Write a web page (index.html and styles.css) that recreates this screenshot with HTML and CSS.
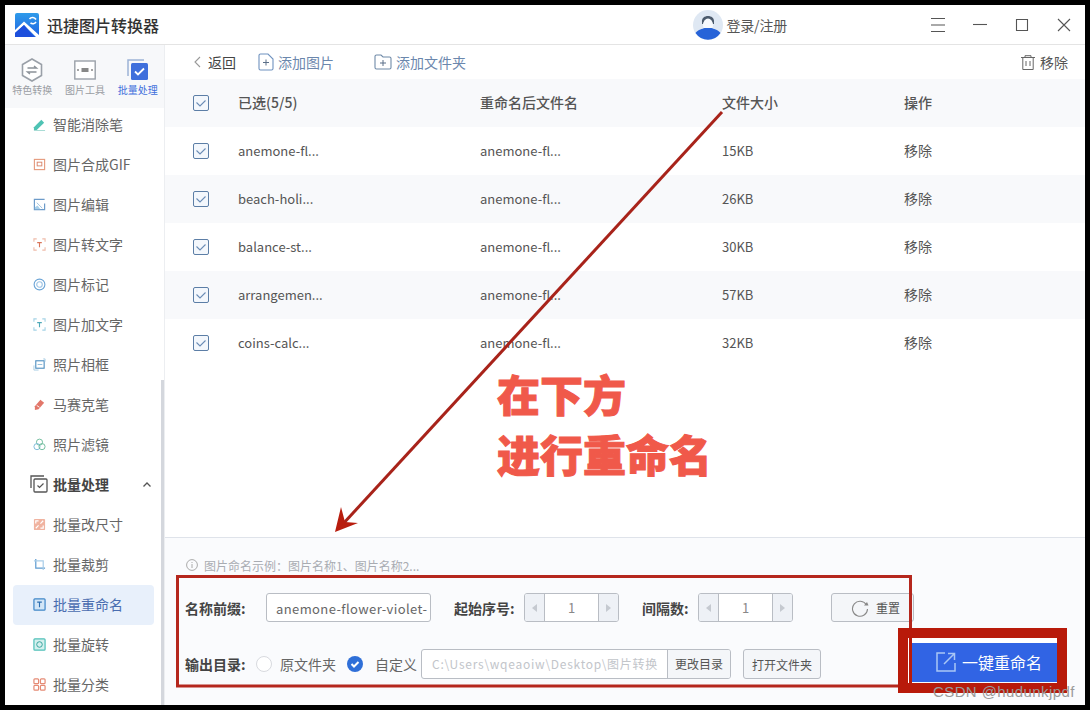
FILE: index.html
```html
<!DOCTYPE html>
<html lang="zh-CN">
  <head>
    <meta charset="UTF-8" />
    <title>迅捷图片转换器</title>
    <link rel="stylesheet" href="styles.css">
  </head>
  <body>
    <div class="app">
      <header class="titlebar">
        <svg class="logo" viewBox="0 0 24 24">
          <defs>
            <linearGradient id="logoBg" x1="0" y1="0" x2="0" y2="1">
              <stop offset="0" stop-color="#2f9bea" />
              <stop offset="1" stop-color="#1f62e2" />
            </linearGradient>
          </defs>
          <rect width="24" height="24" rx="2" fill="url(#logoBg)" />
          <path d="M0 17L9 8.500 24 22v2h-3L9 12 0 20z" fill="#fff" />
          <path d="M0 20l9-8 10 12H0z" fill="#1d4fdc" />
          <path d="M14.500 6a4 4 0 0 1 6.500 .5M21 9a4 4 0 0 1-5.500 1" stroke="#fff" stroke-width="1.600" fill="none" />
        </svg>
        <span class="app-name">迅捷图片转换器</span>
        <div class="user">
          <svg class="avatar" viewBox="0 0 30 30">
            <circle cx="15" cy="15" r="15" fill="#dfe8f3" />
            <path d="M9 12c-1-8 13-8 12 0v2H9z" fill="#4b5a6c" />
            <ellipse cx="15" cy="15" rx="5" ry="6.500" fill="#f6f9fd" />
            <path d="M2.500 23c3-4 7-4 9-5h7c2 1 6 1 9 5a15 15 0 0 1-25 0z" fill="#2763d8" />
          </svg>
          <span>登录/注册</span>
        </div>
        <div class="win-btns">
          <svg viewBox="0 0 14 14"><path d="M0 .5h14M0 7h14M0 13.500h14" /></svg>
          <svg viewBox="0 0 14 14"><path d="M0 6.500h14" /></svg>
          <svg viewBox="0 0 14 14"><path d="M1.500 1.500h11v11h-11z" /></svg>
          <svg viewBox="0 0 14 14"><path d="M1 1l12 12M13 1L1 13" /></svg>
        </div>
      </header>

      <div class="body-wrap">
        <aside class="sidebar">
          <div class="tabs">
            <div class="tab">
              <svg viewBox="0 0 22 24">
                <path d="M11 1l9.500 5.500v11L11 23l-9.500-5.500v-11z" stroke="#9aa0a8" stroke-width="1.600" fill="#fff" />
                <path d="M6.500 10h9l-2.500-2M15.500 14h-9l2.500 2" stroke="#8b9198" stroke-width="1.400" fill="none" />
              </svg>
              <span>特色转换</span>
            </div>
            <div class="tab">
              <svg viewBox="0 0 22 24">
                <rect x=".8" y="3" width="20.400" height="18" stroke="#9aa0a8" stroke-width="1.400" fill="#fff" />
                <path d="M3 12h2M17 12h2" stroke="#888" stroke-width="1.400" />
                <rect x="7.500" y="10" width="7" height="4" fill="#888" />
              </svg>
              <span>图片工具</span>
            </div>
            <div class="tab active">
              <svg viewBox="0 0 22 24">
                <path d="M1 18V2h16" stroke="#9db3d6" stroke-width="1.500" fill="none" />
                <rect x="4" y="5" width="17" height="17" rx="1.500" fill="#3f6fdc" />
                <path d="M8 13.500l3 3 6-6" stroke="#fff" stroke-width="1.800" fill="none" />
              </svg>
              <span>批量处理</span>
            </div>
          </div>

          <ul class="menu">
            <li>
              <svg viewBox="0 0 14 14"><path d="M1 10L9 2l3 3-8 8H1z" fill="#4fc3b4" /><path d="M1 13.500h12" stroke="#9fd8d0" /></svg>
              智能消除笔
            </li>
            <li>
              <svg viewBox="0 0 14 14"><rect x="1.500" y="1.500" width="11" height="11" stroke="#e59a7c" stroke-width="1.200" fill="none" /><rect x="4.500" y="4.500" width="5" height="4" stroke="#d9846a" fill="none" /></svg>
              图片合成GIF
            </li>
            <li>
              <svg viewBox="0 0 14 14"><path d="M12.500 1.500h-11v11h11V6" stroke="#6d9bc9" stroke-width="1.300" fill="none" /><path d="M4 5l6 6" stroke="#9cc0dd" /><path d="M2 10l3-2 3 4H2z" fill="#a9d0ea" /></svg>
              图片编辑
            </li>
            <li>
              <svg viewBox="0 0 14 14"><path d="M1 4V1h3M10 1h3v3M13 10v3h-3M4 13H1v-3" stroke="#efbcaa" stroke-width="1.200" fill="none" /><path d="M4.500 5h5M7 5v5" stroke="#d9755a" stroke-width="1.200" /></svg>
              图片转文字
            </li>
            <li>
              <svg viewBox="0 0 14 14"><circle cx="7" cy="7" r="5.800" stroke="#6ba4d6" stroke-width="1.200" fill="none" /><circle cx="7" cy="7" r="3" stroke="#9cc3e4" stroke-width="1.200" fill="none" /></svg>
              图片标记
            </li>
            <li>
              <svg viewBox="0 0 14 14"><path d="M1 4V1h3M10 1h3v3M13 10v3h-3M4 13H1v-3" stroke="#a5d3e6" stroke-width="1.200" fill="none" /><path d="M4.500 5h5M7 5v5" stroke="#4fa9b8" stroke-width="1.200" /></svg>
              图片加文字
            </li>
            <li>
              <svg viewBox="0 0 14 14"><rect x="3" y="3" width="9" height="8" stroke="#4f8fc0" stroke-width="1.200" fill="none" /><path d="M1 8v5h5M11 1h2v3" stroke="#a8cce4" fill="none" /><path d="M5 7h5" stroke="#8fbcd9" /></svg>
              照片相框
            </li>
            <li>
              <svg viewBox="0 0 14 14"><path d="M2 9l6-7 4 3-6 7-4 1z" fill="#e2776a" /><path d="M4 8l3 2" stroke="#fff" /></svg>
              马赛克笔
            </li>
            <li>
              <svg viewBox="0 0 14 14"><circle cx="7" cy="4.500" r="3.300" stroke="#6dbb9c" fill="none" /><circle cx="4.300" cy="9.300" r="3.300" stroke="#79b8d8" fill="none" /><circle cx="9.700" cy="9.300" r="3.300" stroke="#6dbb9c" fill="none" /></svg>
              照片滤镜
            </li>
            <li class="group">
              <svg class="group-icon" viewBox="0 0 18 18"><path d="M1 13V1h13" stroke="#555" stroke-width="1.300" fill="none" /><rect x="4" y="4" width="13" height="13" rx="1" stroke="#555" stroke-width="1.300" fill="none" /><path d="M7.500 10.500l2 2 4-4" stroke="#555" stroke-width="1.200" fill="none" /></svg>
              批量处理
              <svg class="chevron" viewBox="0 0 8 5"><path d="M.5 4.500L4 1l3.500 3.500" stroke="#555" stroke-width="1.300" fill="none" /></svg>
            </li>
            <li>
              <svg viewBox="0 0 14 14"><rect x="1" y="1" width="12" height="12" rx="1" fill="#f0b3a0" /><path d="M3 6V3h3M11 8v3H8M8 6l3-3M6 8l-3 3" stroke="#fff" stroke-width="1.300" fill="none" /></svg>
              批量改尺寸
            </li>
            <li>
              <svg viewBox="0 0 14 14"><path d="M3 1v10h10" stroke="#5d9bd0" stroke-width="1.300" fill="none" /><path d="M1 3h10v10" stroke="#a9cde8" stroke-width="1.300" fill="none" /></svg>
              批量裁剪
            </li>
            <li class="current">
              <svg viewBox="0 0 14 14"><rect x="1" y="1" width="12" height="12" rx="1" stroke="#3f86c8" stroke-width="1.300" fill="#d3e6f7" /><path d="M4.500 4.500h5M7 4.500v5.500" stroke="#2f6fb0" stroke-width="1.200" /></svg>
              批量重命名
            </li>
            <li>
              <svg viewBox="0 0 14 14"><rect x="1" y="1" width="12" height="12" rx="1" stroke="#4fc0b8" stroke-width="1.300" fill="#d5f0ee" /><circle cx="7" cy="7" r="3" stroke="#2f9f98" fill="none" /></svg>
              批量旋转
            </li>
            <li>
              <svg viewBox="0 0 14 14"><g stroke="#e58a74" stroke-width="1.300" fill="none"><rect x="1" y="1" width="5" height="5" rx="1" /><rect x="8" y="1" width="5" height="5" rx="1" /><rect x="1" y="8" width="5" height="5" rx="1" /><rect x="8" y="8" width="5" height="5" rx="1" /></g></svg>
              批量分类
            </li>
          </ul>
          <div class="scrollbar"></div>
        </aside>

        <main class="main">
          <div class="toolbar">
            <svg class="back" viewBox="0 0 8 12"><path d="M7 1L2 6l5 5" stroke="#999" stroke-width="1.100" fill="none" /></svg>
            <span class="back-text">返回</span>
            <span class="tool add-img">
              <svg viewBox="0 0 16 18"><path d="M1 2.500A1.500 1.500 0 0 1 2.500 1H10l5 5v9.500a1.500 1.500 0 0 1-1.500 1.500h-11A1.500 1.500 0 0 1 1 15.500z" stroke="#6f92bf" stroke-width="1.100" fill="none" /><path d="M5 9.500h6M8 6.500v6" stroke="#5a6f88" /></svg>
              添加图片
            </span>
            <span class="tool add-dir">
              <svg viewBox="0 0 18 16"><path d="M1 2.500A1.500 1.500 0 0 1 2.500 1H7l2 2h6.500A1.500 1.500 0 0 1 17 4.500v9a1.500 1.500 0 0 1-1.500 1.500h-13A1.500 1.500 0 0 1 1 13.500z" stroke="#6f8aa8" stroke-width="1.100" fill="none" /><path d="M6 9h6M9 6v6" stroke="#5a6f88" /></svg>
              添加文件夹
            </span>
            <span class="remove-all">
              <svg viewBox="0 0 14 15"><path d="M0 2.500h14M4 2.500V.7h6v1.800M1.800 2.500v12h10.400v-12M5 6v5M9 6v5" stroke="#666" fill="none" /></svg>
              移除
            </span>
          </div>

          <div class="row head">
            <svg class="check" viewBox="0 0 16 16"><rect x=".5" y=".5" width="15" height="15" rx="1.500" /><path d="M3.500 7.500L7 11l5.500-5.500" /></svg>
            <span>已选(5/5)</span>
            <span>重命名后文件名</span>
            <span>文件大小</span>
            <span>操作</span>
          </div>
          <div class="row">
            <svg class="check" viewBox="0 0 16 16"><rect x=".5" y=".5" width="15" height="15" rx="1.500" /><path d="M3.500 7.500L7 11l5.500-5.500" /></svg>
            <span>anemone-fl...</span><span>anemone-fl...</span><span>15KB</span><span>移除</span>
          </div>
          <div class="row alt">
            <svg class="check" viewBox="0 0 16 16"><rect x=".5" y=".5" width="15" height="15" rx="1.500" /><path d="M3.500 7.500L7 11l5.500-5.500" /></svg>
            <span>beach-holi...</span><span>anemone-fl...</span><span>26KB</span><span>移除</span>
          </div>
          <div class="row">
            <svg class="check" viewBox="0 0 16 16"><rect x=".5" y=".5" width="15" height="15" rx="1.500" /><path d="M3.500 7.500L7 11l5.500-5.500" /></svg>
            <span>balance-st...</span><span>anemone-fl...</span><span>30KB</span><span>移除</span>
          </div>
          <div class="row alt">
            <svg class="check" viewBox="0 0 16 16"><rect x=".5" y=".5" width="15" height="15" rx="1.500" /><path d="M3.500 7.500L7 11l5.500-5.500" /></svg>
            <span>arrangemen...</span><span>anemone-fl...</span><span>57KB</span><span>移除</span>
          </div>
          <div class="row">
            <svg class="check" viewBox="0 0 16 16"><rect x=".5" y=".5" width="15" height="15" rx="1.500" /><path d="M3.500 7.500L7 11l5.500-5.500" /></svg>
            <span>coins-calc...</span><span>anemone-fl...</span><span>32KB</span><span>移除</span>
          </div>

          <section class="panel">
            <div class="tip">
              <svg viewBox="0 0 12 12"><circle cx="6" cy="6" r="5.400" stroke="#aaa" fill="none" /><path d="M6 5v4M6 3v1" stroke="#aaa" /></svg>
              图片命名示例：图片名称1、图片名称2...
            </div>
            <div class="form-row first">
              <label class="lbl prefix">名称前缀:</label>
              <div class="field name-field">anemone-flower-violet-</div>
              <label class="lbl start">起始序号:</label>
              <div class="stepper">
                <span class="step"><i class="tri left"></i></span>
                <span class="num">1</span>
                <span class="step"><i class="tri right"></i></span>
              </div>
              <label class="lbl gap-lbl">间隔数:</label>
              <div class="stepper">
                <span class="step"><i class="tri left"></i></span>
                <span class="num">1</span>
                <span class="step"><i class="tri right"></i></span>
              </div>
              <div class="btn reset">
                <svg viewBox="0 0 18 18"><path d="M15.500 6A7.500 7.500 0 1 0 16.500 10" stroke="#888" stroke-width="1.100" fill="none" /><path d="M13 6.500h4.500L16 3z" fill="#888" /></svg>
                重置
              </div>
            </div>
            <div class="form-row second">
              <label class="lbl out">输出目录:</label>
              <span class="radio"></span>
              <span class="opt first-opt">原文件夹</span>
              <svg class="radio-on" viewBox="0 0 16 16"><circle cx="8" cy="8" r="8" fill="#2f6fd8" /><path d="M4.500 8l2.500 2.500 4.500-4.500" stroke="#fff" stroke-width="2" fill="none" /></svg>
              <span class="opt second-opt">自定义</span>
              <div class="path">
                <span class="path-text">C:\Users\wqeaoiw\Desktop\图片转换</span>
                <span class="path-btn">更改目录</span>
              </div>
              <div class="btn open-dir">打开文件夹</div>
              <div class="go">
                <svg viewBox="0 0 20 20"><path d="M9 1H1v18h18v-8" stroke="#a9c6f5" stroke-width="1.500" fill="none" /><path d="M8 12L18 2M12 1.500h6.500V8" stroke="#a9c6f5" stroke-width="1.500" fill="none" /></svg>
                一键重命名
              </div>
            </div>
          </section>
        </main>
      </div>
    </div>

    <!-- red callouts drawn on top of the window -->
    <svg class="marks" viewBox="0 0 1090 710">
      <path d="M722 112L342 525" stroke="#a8231a" stroke-width="3" fill="none" />
      <path d="M335 532L341 507 345 522 358 523z" fill="#b81d0e" />
      <rect x="177.500" y="576.500" width="733" height="109.500" stroke="#b5271d" stroke-width="3" fill="none" />
      <rect x="903" y="633" width="159" height="55" stroke="#b81a0a" stroke-width="10" fill="none" />
      <rect x="908" y="638" width="4" height="45" fill="#b81a0a" />
      <rect x="908" y="638" width="1" height="45" fill="#fff" />
      <rect x="912" y="638" width="145" height="5" fill="#fff" />
    </svg>
    <div class="callout">在下方<br>进行重命名</div>
    <div class="watermark">CSDN @hudunkjpdf</div>
  </body>
</html>
```

FILE: styles.css
```css
* {
  box-sizing: border-box;
}
html,
body {
  margin: 0;
  height: 710px;
  overflow: hidden;
}
body {
  position: relative;
  background: #000;
  font-family: "Noto Sans CJK SC", "Noto Sans", sans-serif;
  color: #555;
  font-size: 14px;
}
.app {
  margin: 5px;
  width: 1080px;
  height: 700px;
  background: #fff;
  display: flex;
  flex-direction: column;
}

/* title bar */
.titlebar {
  height: 40px;
  flex: none;
  display: flex;
  align-items: center;
  padding-left: 10px;
  border-bottom: 1px solid #e4e4e4;
}
.logo {
  width: 24px;
  height: 24px;
}
.app-name {
  margin-left: 8px;
  font-size: 16px;
  font-weight: 500;
  color: #333;
}
.user {
  margin-left: auto;
  display: flex;
  align-items: center;
  gap: 4px;
  font-size: 14px;
  letter-spacing: -0.200px;
  color: #555;
  margin-right: 130px;
}
.avatar {
  width: 30px;
  height: 30px;
}
.win-btns {
  display: flex;
}
.win-btns svg {
  width: 42px;
  height: 14px;
  fill: none;
  stroke: #555;
  stroke-width: 1.100;
}

.body-wrap {
  flex: 1;
  display: flex;
  min-height: 0;
}

/* left column */
.sidebar {
  width: 160px;
  flex: none;
  border-right: 1px solid #eceef1;
  position: relative;
  overflow: hidden;
}
.tabs {
  height: 63px;
  display: flex;
  background: #f7f8fa;
  padding-left: 1px;
}
.tab {
  width: 53px;
  display: flex;
  flex-direction: column;
  align-items: center;
  padding-top: 13px;
  font-size: 10px;
  line-height: 14px;
  color: #9a9da3;
}
.tab svg {
  width: 22px;
  height: 24px;
  margin-bottom: 1px;
}
.tab.active {
  color: #3f6fdc;
}
.menu {
  list-style: none;
  margin: -3px 0 0;
  padding: 0;
}
.menu li {
  height: 40px;
  margin-left: 8px;
  width: 141px;
  padding: 0 0 2px 20px;
  display: flex;
  align-items: center;
  gap: 7px;
  color: #666;
  border-radius: 4px;
  white-space: nowrap;
}
.menu li svg {
  width: 13px;
  height: 13px;
  flex: none;
}
.menu li.group {
  font-weight: 700;
  color: #444;
  padding-left: 17px;
  gap: 5px;
}
.menu li svg.group-icon {
  width: 18px;
  height: 18px;
}
.menu li svg.chevron {
  width: 8px;
  height: 5px;
  margin-left: 29px;
}
.menu li.current {
  background: #e8f0fb;
  color: #4a6db0;
}
.scrollbar {
  position: absolute;
  right: 0;
  top: 335px;
  bottom: 0;
  width: 3px;
  background: #d4d7dd;
}

/* right column */
.main {
  flex: 1;
  min-width: 0;
  display: flex;
  flex-direction: column;
}
.toolbar {
  height: 34px;
  flex: none;
  display: flex;
  align-items: center;
  padding-left: 28px;
  color: #444;
}
.back {
  width: 8px;
  height: 12px;
}
.back-text {
  margin-left: 7px;
}
.tool {
  display: flex;
  align-items: center;
  gap: 4px;
  color: #6b87ad;
}
.tool.add-img {
  margin-left: 22px;
}
.tool.add-img svg {
  width: 16px;
  height: 18px;
}
.tool.add-dir {
  margin-left: 40px;
}
.tool.add-dir svg {
  width: 18px;
  height: 16px;
}
.remove-all {
  margin-left: auto;
  margin-right: 17px;
  display: flex;
  align-items: center;
  gap: 5px;
  font-size: 14px;
  color: #555;
}
.remove-all svg {
  width: 14px;
  height: 15px;
}

.row {
  height: 48px;
  flex: none;
  display: grid;
  grid-template-columns: 45px 242px 242px 182px 1fr;
  align-items: center;
  padding-left: 28px;
  font-size: 13px;
  color: #555;
}
.row span {
  position: relative;
  top: -1px;
}
.row span:last-child {
  font-size: 14px;
}
.row.head,
.row.alt {
  background: #f8f9fb;
}
.row.head {
  font-weight: 500;
  color: #555;
}
.row.head span {
  font-size: 14px;
}
.check {
  width: 16px;
  height: 16px;
}
.check rect {
  fill: #f3f7fc;
  stroke: #5c7ea6;
}
.check path {
  fill: none;
  stroke: #6a8cb5;
  stroke-width: 1.100;
}

/* rename options at the bottom */
.panel {
  margin-top: auto;
  height: 168px;
  flex: none;
  background: #fafbfd;
  border-top: 1px solid #dfe3ea;
  padding: 19px 0 0 20px;
}
.tip {
  height: 16px;
  display: flex;
  align-items: center;
  gap: 6px;
  font-size: 12px;
  color: #a9acb2;
}
.tip svg {
  width: 12px;
  height: 12px;
  margin-left: 1px;
}
.form-row {
  display: flex;
  align-items: center;
}
.form-row.first {
  height: 29px;
  margin-top: 20px;
}
.form-row.second {
  height: 30px;
  margin-top: 27px;
}
.lbl {
  font-weight: 700;
  color: #444;
  flex: none;
}
.lbl.prefix {
  width: 81px;
}
.field {
  width: 165px;
  height: 29px;
  border: 1px solid #b9bdc4;
  border-radius: 3px;
  background: #fff;
  padding-left: 9px;
  font-size: 13px;
  line-height: 30px;
  letter-spacing: 0.400px;
  color: #666;
  overflow: hidden;
  white-space: nowrap;
}
.lbl.start {
  margin-left: 23px;
  width: 70px;
}
.lbl.gap-lbl {
  margin-left: 23px;
  width: 56px;
}
.stepper {
  width: 95px;
  height: 29px;
  display: flex;
  border: 1px solid #b9bdc4;
  border-radius: 3px;
  background: #fff;
  overflow: hidden;
}
.step {
  width: 19px;
  flex: none;
  background: #eef1f6;
  display: flex;
  align-items: center;
  justify-content: center;
}
.num {
  flex: 1;
  text-align: center;
  font-size: 13px;
  line-height: 27px;
  color: #888;
  border-left: 1px solid #b9bdc4;
  border-right: 1px solid #b9bdc4;
}
.tri {
  width: 0;
  height: 0;
  border-top: 4px solid transparent;
  border-bottom: 4px solid transparent;
}
.tri.left {
  border-right: 5px solid #c5c9d0;
}
.tri.right {
  border-left: 5px solid #c5c9d0;
}
.btn {
  height: 29px;
  border: 1px solid #b9bdc4;
  border-radius: 3px;
  background: #f4f6f9;
  font-size: 12px;
  color: #555;
  display: flex;
  align-items: center;
  justify-content: center;
  flex: none;
}
.btn.reset {
  margin-left: 38px;
  width: 83px;
  gap: 7px;
  padding-left: 6px;
}
.btn.reset svg {
  width: 18px;
  height: 18px;
}
.lbl.out {
  width: 71px;
}
.radio {
  width: 16px;
  height: 16px;
  border-radius: 50%;
  border: 1px solid #d8dadf;
  background: #fff;
  flex: none;
}
.opt {
  font-size: 14px;
  color: #666;
  flex: none;
}
.first-opt {
  margin-left: 8px;
  width: 56px;
}
.radio-on {
  width: 16px;
  height: 16px;
  margin-left: 11px;
  flex: none;
}
.second-opt {
  margin-left: 12px;
  width: 46px;
}
.path {
  width: 310px;
  height: 30px;
  display: flex;
  border: 1px solid #b9bdc4;
  border-radius: 3px;
  background: #fff;
  flex: none;
  overflow: hidden;
  font-size: 12px;
  line-height: 28px;
}
.path-text {
  width: 245px;
  padding-left: 10px;
  color: #c2c5ca;
  white-space: nowrap;
  overflow: hidden;
  letter-spacing: 0.750px;
}
.path-btn {
  flex: 1;
  text-align: center;
  background: #f4f6f9;
  border-left: 1px solid #b9bdc4;
  color: #555;
}
.btn.open-dir {
  margin-left: 12px;
  width: 78px;
  height: 30px;
}
.go {
  margin-left: 91px;
  margin-bottom: 4px;
  width: 145px;
  height: 40px;
  flex: none;
  background: #3164e4;
  color: #fff;
  font-size: 16px;
  display: flex;
  align-items: center;
  padding-left: 24px;
  gap: 6px;
}
.go svg {
  width: 20px;
  height: 20px;
}

/* callouts */
.marks {
  position: absolute;
  left: 0;
  top: 0;
  width: 1090px;
  height: 710px;
  pointer-events: none;
}
.callout {
  position: absolute;
  left: 497px;
  top: 363px;
  font-size: 43px;
  line-height: 60px;
  font-weight: 900;
  color: #f0594a;
  -webkit-text-stroke: 1px #f0594a;
  white-space: nowrap;
}
.watermark {
  position: absolute;
  left: 933px;
  top: 683px;
  font-family: "Liberation Sans", sans-serif;
  font-size: 15px;
  line-height: 18px;
  letter-spacing: 0.400px;
  color: #9a9a9a;
  white-space: nowrap;
}
```
